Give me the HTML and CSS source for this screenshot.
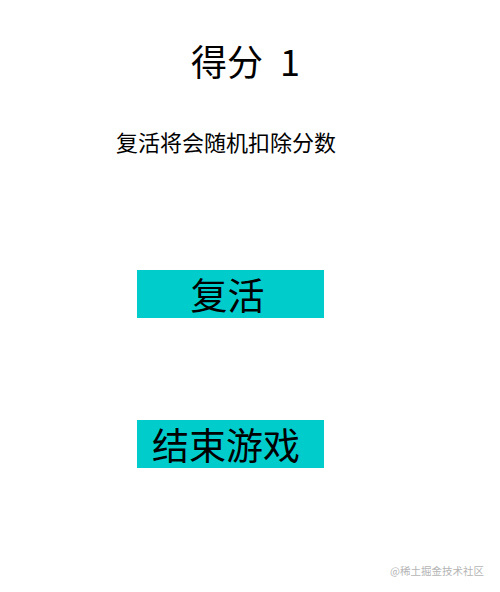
FILE: index.html
```html
<!DOCTYPE html>
<html lang="zh">
<head>
    <meta charset="UTF-8">
    <meta name="viewport" content="width=device-width, initial-scale=1.0">
    <title>游戏结束</title>
    <link rel="stylesheet" href="styles.css">
</head>
<body>

<div id="game-over">
    <h1 class="score">得分 <span id="score">1</span></h1>
    <p class="tip">复活将会随机扣除分数</p>
    <button class="btn btn-revive">复活</button>
    <button class="btn btn-end">结束游戏</button>
</div>

<div class="watermark">@稀土掘金技术社区</div>

</body>
</html>
```

FILE: styles.css
```css
body {
    margin: 0;
    background: #fff;
    color: #000;
    font-family: "Noto Sans CJK SC", "Noto Sans", sans-serif;
    width: 500px;
    height: 592px;
    position: relative;
    overflow: hidden;
}
#game-over {
    display: flex;
    flex-direction: column;
    align-items: flex-start;
}
.score {
    margin: 42px 0 0 191px;
    font-size: 36px;
    font-weight: normal;
    line-height: 36px;
    white-space: pre;
}
#score {
    margin-left: 9px;
}
.tip {
    margin: 52px 0 0 116px;
    font-size: 22px;
    line-height: 22px;
}
.btn {
    margin-left: 137px;
    width: 187px;
    height: 48px;
    padding: 0 6px 0 0;
    border: none;
    background: #00cccc;
    color: #000;
    font-family: inherit;
    font-size: 37px;
    line-height: 48px;
    text-align: center;
}
.btn-revive {
    margin-top: 118px;
}
.btn-end {
    margin-top: 102px;
    text-align: left;
    padding-left: 15px;
}
.watermark {
    position: absolute;
    right: 16px;
    bottom: 14px;
    font-size: 10.5px;
    color: #b5b5b5;
}
```
